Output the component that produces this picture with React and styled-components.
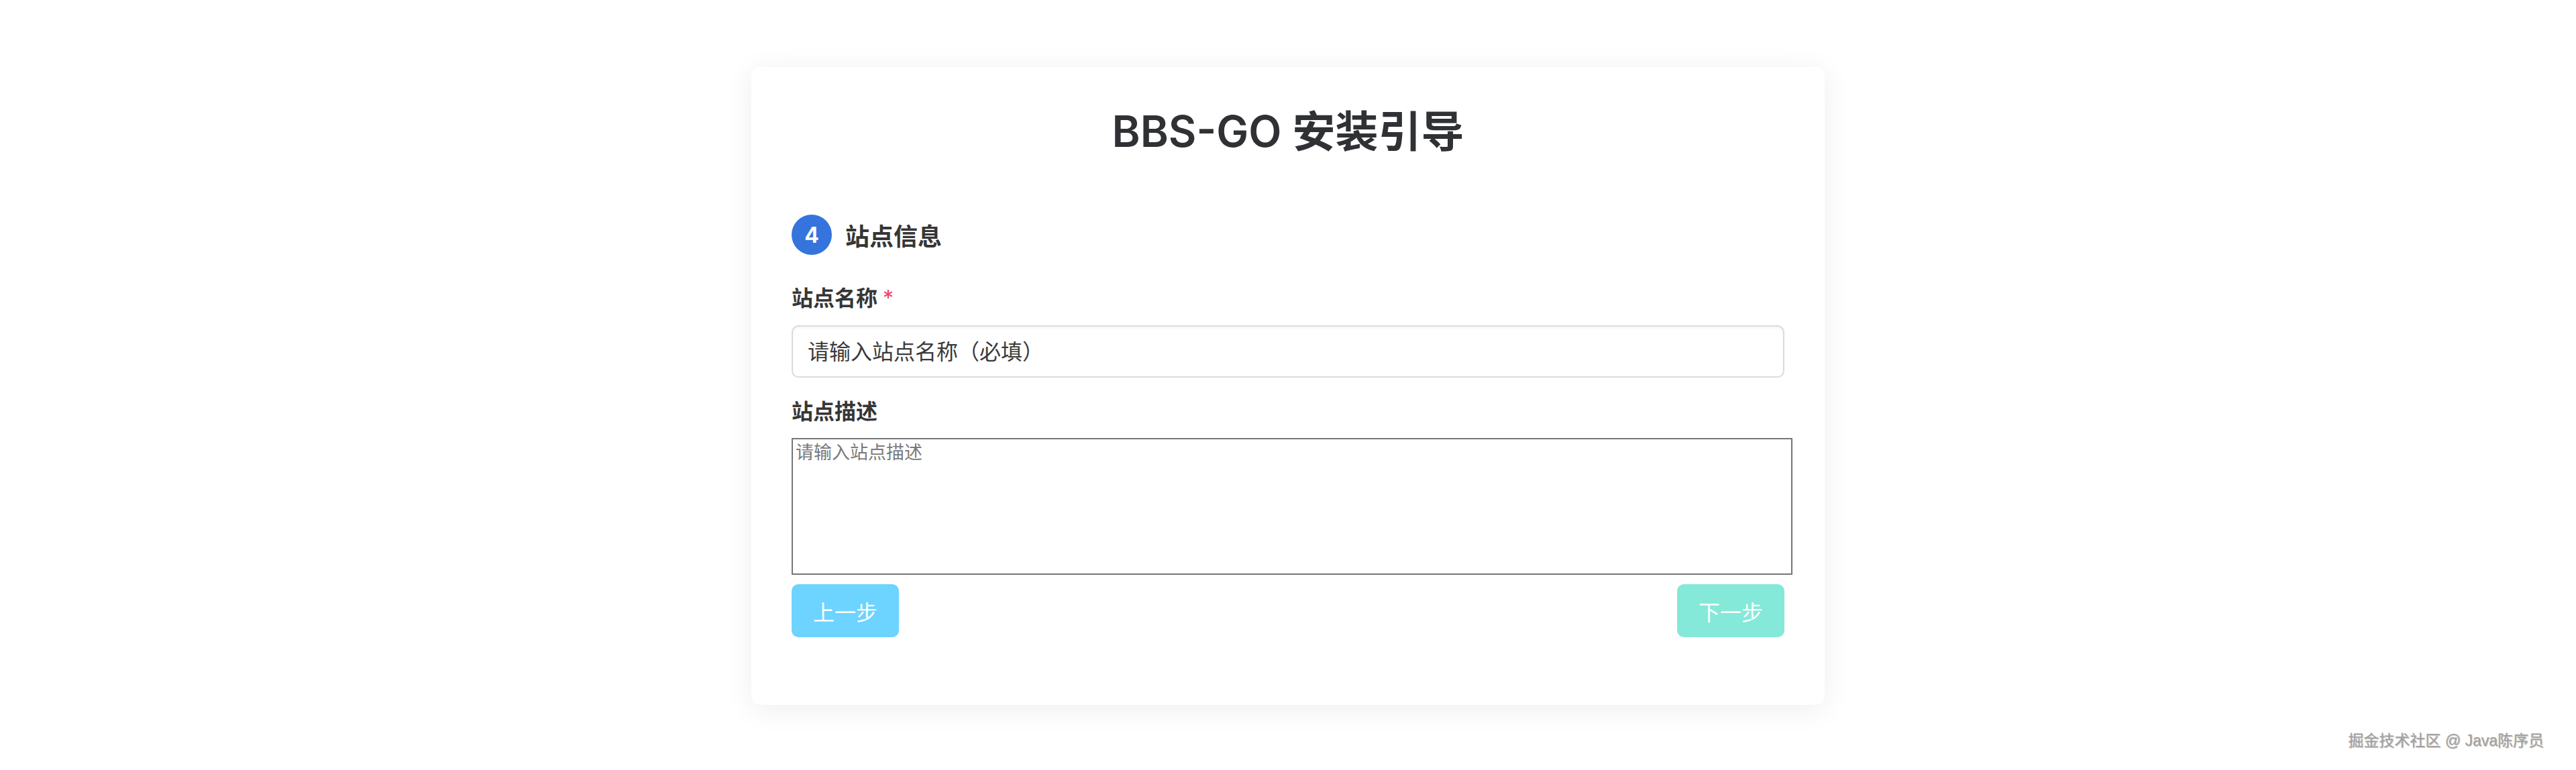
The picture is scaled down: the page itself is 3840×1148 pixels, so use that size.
import React from 'react'
import styled, { createGlobalStyle } from 'styled-components'

const GlobalStyle = createGlobalStyle`
  html, body {
    margin: 0;
    padding: 0;
    background: #ffffff;
    font-family: Inter, "Noto Sans CJK SC", sans-serif;
  }
`

const Page = styled.div`
  position: relative;
  width: 3840px;
  height: 1148px;
  padding-top: 100px;
  box-sizing: border-box;
  display: flex;
  justify-content: center;
  align-items: flex-start;
  overflow: hidden;
`

const Card = styled.div`
  width: 1600px;
  box-sizing: border-box;
  padding: 60px 60px 101px;
  background: #ffffff;
  border-radius: 14px;
  box-shadow: 0 6px 44px rgba(0, 0, 0, 0.07);
  display: flex;
  flex-direction: column;
`

const Title = styled.h1`
  margin: 0;
  font-size: 64px;
  line-height: 72px;
  font-weight: 600;
  color: #2f3135;
  text-align: center;
`

const StepHeader = styled.div`
  margin-top: 88px;
  display: flex;
  align-items: center;
  gap: 20px;
  height: 60px;
`

const StepNumber = styled.span`
  width: 60px;
  height: 60px;
  border-radius: 50%;
  background: #3574dc;
  color: #ffffff;
  font-size: 32px;
  font-weight: 700;
  display: flex;
  align-items: center;
  justify-content: center;
`

const StepTitle = styled.span`
  font-size: 36px;
  font-weight: 700;
  color: #363636;
`

const Label = styled.label`
  margin-top: ${p => p.$gap}px;
  font-size: 32px;
  line-height: 48px;
  font-weight: 700;
  color: #363636;
  display: flex;
  align-items: center;
`

const Required = styled.span`
  color: #f14668;
  margin-left: 8px;
  font-weight: 400;
`

const TextInput = styled.input`
  margin-top: 16px;
  width: 100%;
  height: 78px;
  box-sizing: border-box;
  padding: 0 22px;
  border: 2px solid #dbdbdb;
  border-radius: 10px;
  box-shadow: inset 0 2px 4px rgba(10, 10, 10, 0.05);
  font-family: Inter, "Noto Sans CJK SC", sans-serif;
  font-size: 32px;
  color: #363636;
  outline: none;

  &::placeholder {
    color: #3a3a3a;
  }
`

const TextArea = styled.textarea`
  margin-top: 15px;
  width: calc(100% + 12px);
  height: 204px;
  box-sizing: border-box;
  padding: 3px 4px;
  border: 2px solid #767676;
  border-radius: 0;
  resize: none;
  font-family: "DejaVu Sans Mono", "Noto Sans CJK SC", monospace;
  font-size: 27px;
  line-height: 1.25;
  outline: none;

  &::placeholder {
    color: #7a7a7a;
  }
`

const Actions = styled.div`
  margin-top: 14px;
  display: flex;
  justify-content: space-between;
`

const StepButton = styled.button`
  height: 79px;
  padding: 0 32px;
  border: none;
  border-radius: 10px;
  background: ${p => p.$color};
  color: #ffffff;
  font-family: Inter, "Noto Sans CJK SC", sans-serif;
  font-size: 32px;
  cursor: pointer;
`

const Watermark = styled.div`
  position: absolute;
  right: 48px;
  bottom: 29px;
  font-family: "Liberation Sans", "Noto Sans CJK SC", sans-serif;
  font-size: 23px;
  color: #a3a3a3;
  text-shadow: 1px 1px 1px rgba(0, 0, 0, 0.3), -1px -1px 0 #ffffff;
`

export default function App() {
  return (
    <Page>
      <GlobalStyle />
      <Card>
        <Title>BBS-GO 安装引导</Title>

        <StepHeader>
          <StepNumber>4</StepNumber>
          <StepTitle>站点信息</StepTitle>
        </StepHeader>

        <Label $gap={41}>
          站点名称<Required>*</Required>
        </Label>
        <TextInput placeholder="请输入站点名称（必填）" />

        <Label $gap={27}>站点描述</Label>
        <TextArea placeholder="请输入站点描述" />

        <Actions>
          <StepButton $color="#6dd3ff">上一步</StepButton>
          <StepButton $color="#84e9d8">下一步</StepButton>
        </Actions>
      </Card>
      <Watermark>掘金技术社区 @ Java陈序员</Watermark>
    </Page>
  )
}
